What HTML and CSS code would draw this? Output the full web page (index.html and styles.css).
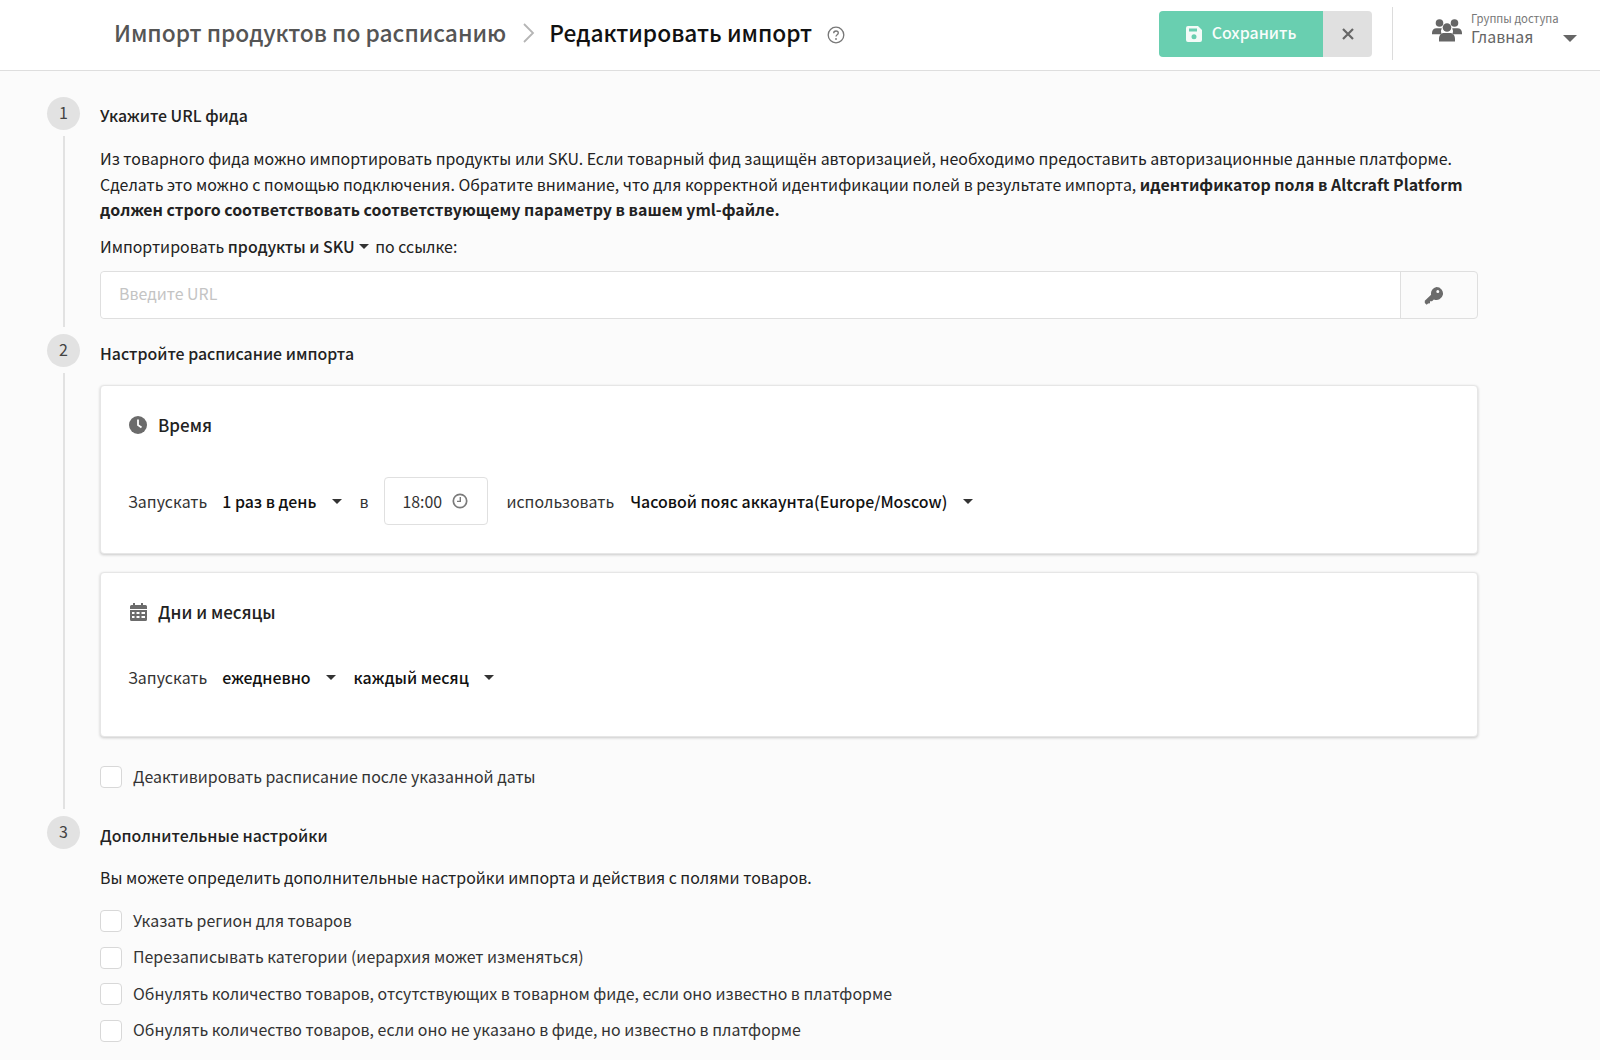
FILE: index.html
```html
<!DOCTYPE html>
<html lang="ru">
<head>
<meta charset="utf-8">
<title>Редактировать импорт</title>
<link rel="stylesheet" href="styles.css">
</head>
<body>
<header class="topbar">
  <div class="crumbs">
    <span class="crumb-parent">Импорт продуктов по расписанию</span>
    <svg class="crumb-sep" width="14" height="22" viewBox="0 0 14 22"><path d="M2 2l9 9-9 9" fill="none" stroke="#b5b5b5" stroke-width="1.800"/></svg>
    <span class="crumb-current">Редактировать импорт</span>
    <svg class="help" width="18" height="18" viewBox="0 0 18 18"><circle cx="9" cy="9" r="7.8" fill="none" stroke="#777" stroke-width="1.3"/><path d="M6.7 7.2c0-1.4 1-2.2 2.3-2.2s2.3.8 2.3 2c0 1.800-2.300 1.800-2.300 3.600" fill="none" stroke="#777" stroke-width="1.3"/><circle cx="9" cy="13" r=".9" fill="#777"/></svg>
  </div>
  <div class="actions">
    <button class="btn-save">
      <svg width="16" height="16" viewBox="0 0 16 16"><path fill-rule="evenodd" d="M2 0h10l4 4v10a2 2 0 0 1-2 2H2a2 2 0 0 1-2-2V2a2 2 0 0 1 2-2zm1 2.500v3h8v-3zM8 8.200a2.500 2.500 0 1 0 0 5 2.500 2.500 0 0 0 0-5z" fill="#f4fbf8"/></svg>
      <span>Сохранить</span>
    </button>
    <button class="btn-close" aria-label="Закрыть">
      <svg width="12" height="12" viewBox="0 0 12 12"><path d="M1 1l10 10M11 1L1 11" stroke="#666" stroke-width="2.200"/></svg>
    </button>
  </div>
  <div class="access">
    <svg class="access-icon" width="30" height="24" viewBox="0 0 30 24" fill="#666"><circle cx="7.500" cy="5" r="3.800"/><circle cx="22.500" cy="5" r="3.800"/><circle cx="15" cy="9.500" r="4.300"/><path d="M0 15c0-3 1.800-4.800 4.500-4.800h5.300a6.500 6.500 0 0 0-.3 6H0zM30 15c0-3-1.800-4.800-4.500-4.800h-5.300a6.500 6.500 0 0 1 .3 6H30zM7 21c0-3.500 2-6 5-6h6c3 0 5 2.500 5 6v2.500H7z"/></svg>
    <div class="access-text">
      <div class="access-label">Группы доступа</div>
      <div class="access-value">Главная</div>
    </div>
    <span class="caret caret-big"></span>
  </div>
</header>

<main class="page">
  <section class="step step-1">
    <div class="rail"><div class="num">1</div><div class="line"></div></div>
    <div class="body">
      <h2 class="step-title">Укажите URL фида</h2>
      <p class="lead">Из товарного фида можно импортировать продукты или SKU. Если товарный фид защищён авторизацией, необходимо предоставить авторизационные данные платформе.<br>Сделать это можно с помощью подключения. Обратите внимание, что для корректной идентификации полей в результате импорта, <b>идентификатор поля в Altcraft Platform должен строго соответствовать соответствующему параметру в вашем yml-файле.</b></p>
      <div class="import-row">Импортировать <b class="select-inline">продукты и SKU</b><span class="caret caret-inline"></span> по ссылке:</div>
      <div class="url-group">
        <div class="url-input">Введите URL</div>
        <div class="url-key">
          <svg width="20" height="20" viewBox="0 0 20 20"><path fill-rule="evenodd" fill="#6b6b6b" d="M12.500 1a6.500 6.500 0 1 1-2.600 12.450L8 15.300H6v2l-2 .1-1.300 1.300L.8 17v-2.200l6.300-6.100A6.500 6.500 0 0 1 12.500 1zm1.300 3a1.500 1.500 0 1 0 0 3 1.500 1.500 0 0 0 0-3z"/></svg>
        </div>
      </div>
    </div>
  </section>

  <section class="step step-2">
    <div class="rail"><div class="num">2</div><div class="line"></div></div>
    <div class="body">
      <h2 class="step-title">Настройте расписание импорта</h2>
      <div class="card card-time">
        <div class="card-title">
          <svg class="card-icon" width="18" height="18" viewBox="0 0 18 18"><circle cx="9" cy="9" r="9" fill="#6b6b6b"/><path d="M9 3.500V9l3.500 2.500" fill="none" stroke="#fff" stroke-width="1.800"/></svg>
          <span>Время</span>
        </div>
        <div class="card-row row-time">
          <span class="lbl">Запускать</span>
          <b class="sel s-freq">1 раз в день</b><span class="caret c-freq"></span>
          <span class="lbl l-in">в</span>
          <div class="time-box">
            <span>18:00</span>
            <svg width="16" height="16" viewBox="0 0 16 16"><circle cx="8" cy="8" r="6.700" fill="none" stroke="#7a7a7a" stroke-width="1.700"/><path d="M8.300 4v4.400H5" fill="none" stroke="#7a7a7a" stroke-width="1.400"/></svg>
          </div>
          <span class="lbl l-use">использовать</span>
          <b class="sel s-tz">Часовой пояс аккаунта(Europe/Moscow)</b><span class="caret c-tz"></span>
        </div>
      </div>
      <div class="card card-days">
        <div class="card-title">
          <svg class="card-icon" width="18" height="18" viewBox="0 0 18 18"><path fill="#6b6b6b" fill-rule="evenodd" d="M4 0h2v2h6V0h2v2h2.500A1.500 1.500 0 0 1 18 3.500V6H1V3.500A1.500 1.500 0 0 1 2.500 2H4zM1 7h17v9.500a1.500 1.500 0 0 1-1.500 1.500h-14A1.500 1.500 0 0 1 1 16.500zm2 2v2h2.500V9zm4.500 0v2h3V9zm5 0v2H16V9zM3 13v2h2.500v-2zm4.500 0v2h3v-2zm5 0v2H16v-2z"/></svg>
          <span>Дни и месяцы</span>
        </div>
        <div class="card-row row-days">
          <span class="lbl">Запускать</span>
          <b class="sel s-freq">ежедневно</b><span class="caret c-day"></span>
          <b class="sel s-month">каждый месяц</b><span class="caret c-month"></span>
        </div>
      </div>
      <label class="check check-deact"><span class="box"></span><span>Деактивировать расписание после указанной даты</span></label>
    </div>
  </section>

  <section class="step step-3">
    <div class="rail"><div class="num">3</div></div>
    <div class="body">
      <h2 class="step-title">Дополнительные настройки</h2>
      <p class="lead lead-3">Вы можете определить дополнительные настройки импорта и действия с полями товаров.</p>
      <div class="checks">
        <label class="check"><span class="box"></span><span>Указать регион для товаров</span></label>
        <label class="check"><span class="box"></span><span>Перезаписывать категории (иерархия может изменяться)</span></label>
        <label class="check"><span class="box"></span><span>Обнулять количество товаров, отсутствующих в товарном фиде, если оно известно в платформе</span></label>
        <label class="check"><span class="box"></span><span>Обнулять количество товаров, если оно не указано в фиде, но известно в платформе</span></label>
      </div>
    </div>
  </section>
</main>
</body>
</html>
```

FILE: styles.css
```css
* { box-sizing: border-box; }
html, body { margin: 0; height: 100%; }
body {
  background: #fbfbfb;
  color: #222;
  font-family: "Noto Sans CJK JP", "Noto Sans", sans-serif;
  font-size: 15.920px;
  overflow: hidden;
}
b { font-weight: 700; }

.topbar {
  height: 71px;
  background: #fff;
  border-bottom: 1px solid #dedede;
  display: flex;
  align-items: center;
  padding-left: 114px;
}
.crumbs { display: flex; align-items: center; flex: 1; font-size: 22.750px; font-weight: 500; padding-bottom: 5px; }
.crumb-parent { color: #555; }
.crumb-sep { margin: 0 13px 0 16px; }
.crumb-current { color: #111; }
.help { margin-left: 15px; margin-top: 4px; }
.actions { display: flex; height: 46px; margin-bottom: 2px; }
.btn-save, .btn-close { border: 0; height: 46px; padding: 0; font: inherit; display: flex; align-items: center; justify-content: center; }
.btn-save {
  width: 164px; background: #69cfb0; color: #f8fdfb; border-radius: 4px 0 0 4px;
  gap: 10px; font-size: 15.920px; font-weight: 500;
}
.btn-save span { padding-bottom: 3px; }
.btn-close { width: 49px; background: #e0e0e0; border-radius: 0 4px 4px 0; }
.access {
  margin-left: 20px; height: 53px; width: 208px; margin-bottom: 4px;
  border-left: 1px solid #dcdcdc;
  display: flex; align-items: center; padding-left: 39px;
}
.access-icon { margin-bottom: 6px; }
.access-text { margin-left: 10px; width: 92px; padding-bottom: 8px; }
.access-label { font-size: 11.300px; line-height: 14px; color: #777; white-space: nowrap; margin-bottom: 2px; margin-left: -1px; }
.access-value { font-size: 15.920px; line-height: 20px; color: #666; margin-left: -1px; }
.access .caret-big { margin: 10px 0 0 -1px; }

.caret { display: inline-block; width: 0; height: 0; border-style: solid; border-color: #333 transparent transparent; border-width: 5px 5px 0; }
.caret-big { border-width: 7px 7px 0; border-top-color: #666; }

.page { padding: 26px 0 0 47px; }
.step { display: flex; width: 1431px; }
.rail { width: 33px; margin-right: 20px; flex: none; display: flex; flex-direction: column; align-items: center; }
.num {
  width: 33px; height: 33px; border-radius: 50%; background: #e2e2e2; color: #444;
  display: flex; align-items: center; justify-content: center; font-size: 16px; padding-bottom: 4px;
}
.line { flex: 1; width: 2px; background: #e2e2e2; margin: 6px 0 7px; }
.body { flex: 1; min-width: 0; padding-top: 8px; }
.step-1 .body { height: 237px; padding-top: 7px; }
.step-2 .body { height: 482px; }
.step-title { margin: 0; font-size: 15.920px; font-weight: 500; line-height: 24px; color: #222; }
.lead { margin: 18px 0 0; line-height: 25.500px; color: #222; }
.import-row { margin-top: 12px; line-height: 24px; }
.select-inline { font-weight: 500; }
.caret-inline { margin: 0 3px 3px 4px; vertical-align: middle; }
.url-group {
  margin-top: 12px; height: 48px; display: flex;
  border: 1px solid #dfdfdf; border-radius: 4px;
}
.url-input { flex: 1; background: #fff; color: #c4c4c4; padding-left: 18px; line-height: 44px; border-radius: 4px 0 0 4px; }
.url-key { width: 77px; border-left: 1px solid #dfdfdf; display: flex; align-items: center; padding: 2px 0 0 23px; }

.card {
  background: #fff; border: 1px solid #e6e6e6; border-radius: 4px;
  box-shadow: 0 1px 3px rgba(0,0,0,.2);
  padding: 0 27px;
}
.step-title + .card { margin-top: 19px; }
.card-time { height: 169px; }
.card-days { height: 165px; margin-top: 18px; }
.card-title { display: flex; align-items: center; height: 24px; font-size: 17px; font-weight: 500; color: #222; gap: 11px; margin-top: 27px; }
.card-title span { padding-bottom: 1px; }
.card-icon { margin-left: 1px; }
.card-row { display: flex; align-items: center; }
.row-time { height: 48px; margin-top: 40px; }
.row-days { height: 24px; margin-top: 41px; }
.sel { font-weight: 500; color: #111; }
.lbl { color: #333; }
.s-freq { margin-left: 15px; }
.c-freq { margin-left: 16px; }
.l-in { margin-left: 17px; }
.time-box {
  margin-left: 16px; width: 104px; height: 48px; background: #fff;
  border: 1px solid #e0e0e0; border-radius: 4px;
  display: flex; align-items: center; padding-left: 17px; gap: 10px; color: #333;
}
.l-use { margin-left: 18px; }
.s-tz { margin-left: 16px; }
.c-tz { margin-left: 16px; }
.c-day { margin-left: 15px; }
.s-month { margin-left: 18px; }
.c-month { margin-left: 15px; }

.check { display: flex; align-items: center; height: 22px; color: #333; gap: 11px; }
.check span:last-child { padding-bottom: 2px; }
.box { width: 22px; height: 22px; background: #fff; border: 1px solid #d8d8d8; border-radius: 4px; flex: none; }
.check-deact { margin-top: 29px; }
.lead-3 { margin-top: 18px; line-height: 24px; }
.step-3 .lead-3 { margin-top: 18px; }
.checks { margin-top: 20px; display: flex; flex-direction: column; gap: 14.500px; }
```
